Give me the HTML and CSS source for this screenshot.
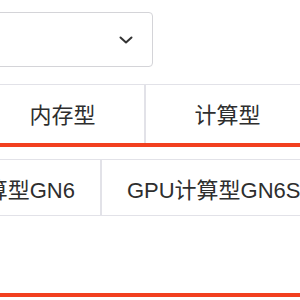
FILE: index.html
```html
<!DOCTYPE html>
<html lang="zh-CN">
<head>
  <meta charset="UTF-8" />
  <meta name="viewport" content="width=device-width, initial-scale=1" />
  <title>实例规格</title>
  <link rel="stylesheet" href="styles.css">
</head>
<body>
  <div class="page">
    <!-- Region select -->
    <div class="select">
      <span class="select-value"></span>
      <svg class="chevron" width="14" height="8" viewBox="0 0 14 8">
        <path d="M1.5 1.5 L7 6.5 L12.5 1.5" fill="none" stroke="#333" stroke-width="2" stroke-linecap="round" stroke-linejoin="round"/>
      </svg>
    </div>

    <!-- Instance family tabs -->
    <div class="tabs">
      <div class="tab">内存型</div>
      <div class="tab">计算型</div>
    </div>

    <!-- Highlighted spec panel -->
    <div class="panel">
      <div class="specs">
        <div class="spec">GPU计算型GN6</div>
        <div class="spec">GPU计算型GN6S</div>
      </div>
    </div>
  </div>
</body>
</html>
```

FILE: styles.css
```css
/* Basic page styling */
body {
  margin: 0;
  padding: 0;
  background: #fff;
  font-family: "Liberation Sans", "Noto Sans CJK SC", sans-serif;
  color: #2e2e2e;
  overflow: hidden;
}
.page {
  width: 300px;
  height: 300px;
  overflow: hidden;
}
/* Select box, its left side runs off the page */
.select {
  box-sizing: border-box;
  display: flex;
  align-items: center;
  justify-content: flex-end;
  margin: 12px 0 0 -20px;
  width: 173px;
  height: 55px;
  padding-right: 19px;
  border: 1px solid #d4d4d8;
  border-radius: 4px;
}
.chevron {
  display: block;
}
/* Tabs row */
.tabs {
  display: flex;
  margin: 17px 0 0 -19px;
  border-top: 1px solid #e2e2e8;
  height: 58px;
}
.tab {
  flex: 0 0 163px;
  display: flex;
  align-items: center;
  justify-content: center;
  padding-bottom: 2px;
  border-right: 2px solid #e2e2e8;
  font-size: 22px;
}
/* Red frame around specs */
.panel {
  box-sizing: border-box;
  height: 154px;
  margin: 0 -10px;
  padding: 12px 0 0 10px;
  border-top: 4px solid #f2401f;
  border-bottom: 4px solid #f2401f;
}
.specs {
  display: flex;
  margin-left: -109px;
  border-top: 1px solid #e2e2e8;
  border-bottom: 1px solid #e2e2e8;
  height: 55px;
}
.spec {
  flex: none;
  display: flex;
  align-items: center;
  padding: 0 25px;
  border-right: 2px solid #e2e2e8;
  font-size: 22px;
  white-space: nowrap;
}
```
